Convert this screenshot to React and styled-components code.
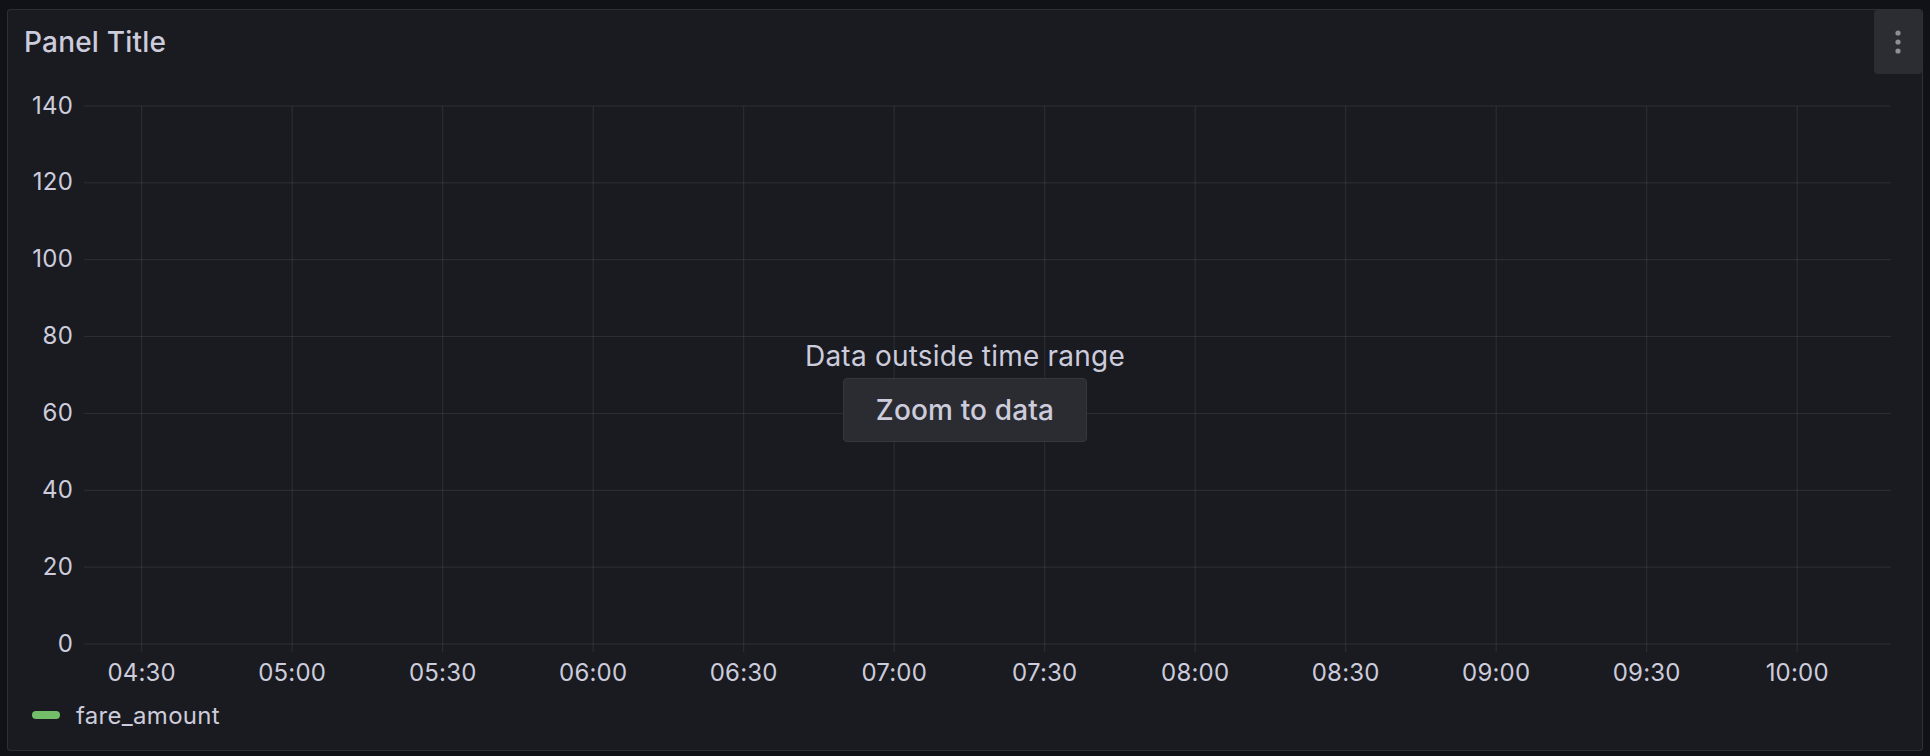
import React from 'react';
import styled, { createGlobalStyle } from 'styled-components';

const GlobalStyle = createGlobalStyle`
  html, body {
    margin: 0;
    padding: 0;
    background: #111217;
  }
  body {
    font-family: Inter, "Noto Sans", sans-serif;
    color: #ccccdc;
  }
`;

const Page = styled.div`
  box-sizing: border-box;
  width: 1930px;
  height: 756px;
  padding: 9px 7px 5px 7px;
`;

const Panel = styled.section`
  box-sizing: border-box;
  width: 1916px;
  height: 742px;
  background: #1a1b20;
  border: 1px solid rgba(204, 204, 220, 0.12);
  border-radius: 4px;
  display: flex;
  flex-direction: column;
`;

const Header = styled.header`
  height: 64px;
  display: flex;
  align-items: center;
  justify-content: space-between;
  padding-left: 16px;
`;

const Title = styled.h2`
  margin: 0;
  font-size: 28px;
  font-weight: 500;
  line-height: 1;
  letter-spacing: 0.2px;
  color: #ccccdc;
`;

const MenuButton = styled.button`
  width: 48px;
  height: 64px;
  border: none;
  border-radius: 4px;
  background: #2c2d33;
  display: flex;
  align-items: center;
  justify-content: center;
  padding: 0;
  cursor: pointer;
`;

const ChartArea = styled.div`
  position: relative;
  height: 620px;
`;

const Overlay = styled.div`
  position: absolute;
  inset: 0;
  padding-top: 8px;
  display: flex;
  flex-direction: column;
  align-items: center;
  justify-content: center;
`;

const OverlayText = styled.div`
  font-size: 28px;
  line-height: 42px;
  letter-spacing: 0.22px;
  color: #ccccdc;
  margin-bottom: 1px;
`;

const ZoomButton = styled.button`
  height: 64px;
  padding: 0 32px;
  font-family: Inter, "Noto Sans", sans-serif;
  font-size: 28px;
  font-weight: 500;
  letter-spacing: 0.15px;
  color: #ccccdc;
  background: #2b2c32;
  border: 1px solid #36373d;
  border-radius: 4px;
  cursor: pointer;
`;

const Legend = styled.div`
  height: 42px;
  display: flex;
  align-items: center;
  gap: 16px;
  padding-left: 24px;
`;

const Swatch = styled.span`
  width: 28px;
  height: 8px;
  border-radius: 4px;
  background: ${(props) => props.color};
`;

const LegendLabel = styled.span`
  font-size: 24px;
  letter-spacing: 0.3px;
  color: #ccccdc;
`;

const yTicks = [140, 120, 100, 80, 60, 40, 20, 0];
const xTicks = ['04:30', '05:00', '05:30', '06:00', '06:30', '07:00', '07:30', '08:00', '08:30', '09:00', '09:30', '10:00'];

const Y_TOP = 106;
const Y_BOTTOM = 644;
const X_FIRST = 141.7;
const X_STEP = 150.5;
const GRID = 'rgba(240, 250, 255, 0.09)';

const Chart = () => {
  const yStep = (Y_BOTTOM - Y_TOP) / (yTicks.length - 1);
  return (
    <svg width="1914" height="620" viewBox="8 74 1914 620" style={{display: 'block'}}>
      {yTicks.map((v, i) => {
        const y = Y_TOP + i * yStep;
        return (
          <g key={v}>
            <line x1="84" x2="1891" y1={y} y2={y} stroke={GRID} strokeWidth="1"/>
            <text x="73" y={y + 7.5} textAnchor="end" fill="#ccccdc" fontSize="24" letterSpacing="0.2" fontFamily="Inter, sans-serif">{v}</text>
          </g>
        );
      })}
      {xTicks.map((t, i) => {
        const x = X_FIRST + i * X_STEP;
        return (
          <g key={t}>
            <line x1={x} x2={x} y1={Y_TOP} y2={Y_BOTTOM + 8} stroke={GRID} strokeWidth="1"/>
            <text x={x} y="681" textAnchor="middle" fill="#ccccdc" fontSize="24" letterSpacing="0.2" fontFamily="Inter, sans-serif">{t}</text>
          </g>
        );
      })}
    </svg>
  );
};

export default () => (
  <Page>
    <GlobalStyle/>
    <Panel>
      <Header>
        <Title>Panel Title</Title>
        <MenuButton aria-label="Menu">
          <svg width="8" height="26" viewBox="0 0 8 26">
            <circle cx="4" cy="4" r="2.6" fill="#8e8f96"/>
            <circle cx="4" cy="13" r="2.6" fill="#8e8f96"/>
            <circle cx="4" cy="22" r="2.6" fill="#8e8f96"/>
          </svg>
        </MenuButton>
      </Header>
      <ChartArea>
        <Chart/>
        <Overlay>
          <OverlayText>Data outside time range</OverlayText>
          <ZoomButton>Zoom to data</ZoomButton>
        </Overlay>
      </ChartArea>
      <Legend>
        <Swatch color="#73bf69"/>
        <LegendLabel>fare_amount</LegendLabel>
      </Legend>
    </Panel>
  </Page>
);
